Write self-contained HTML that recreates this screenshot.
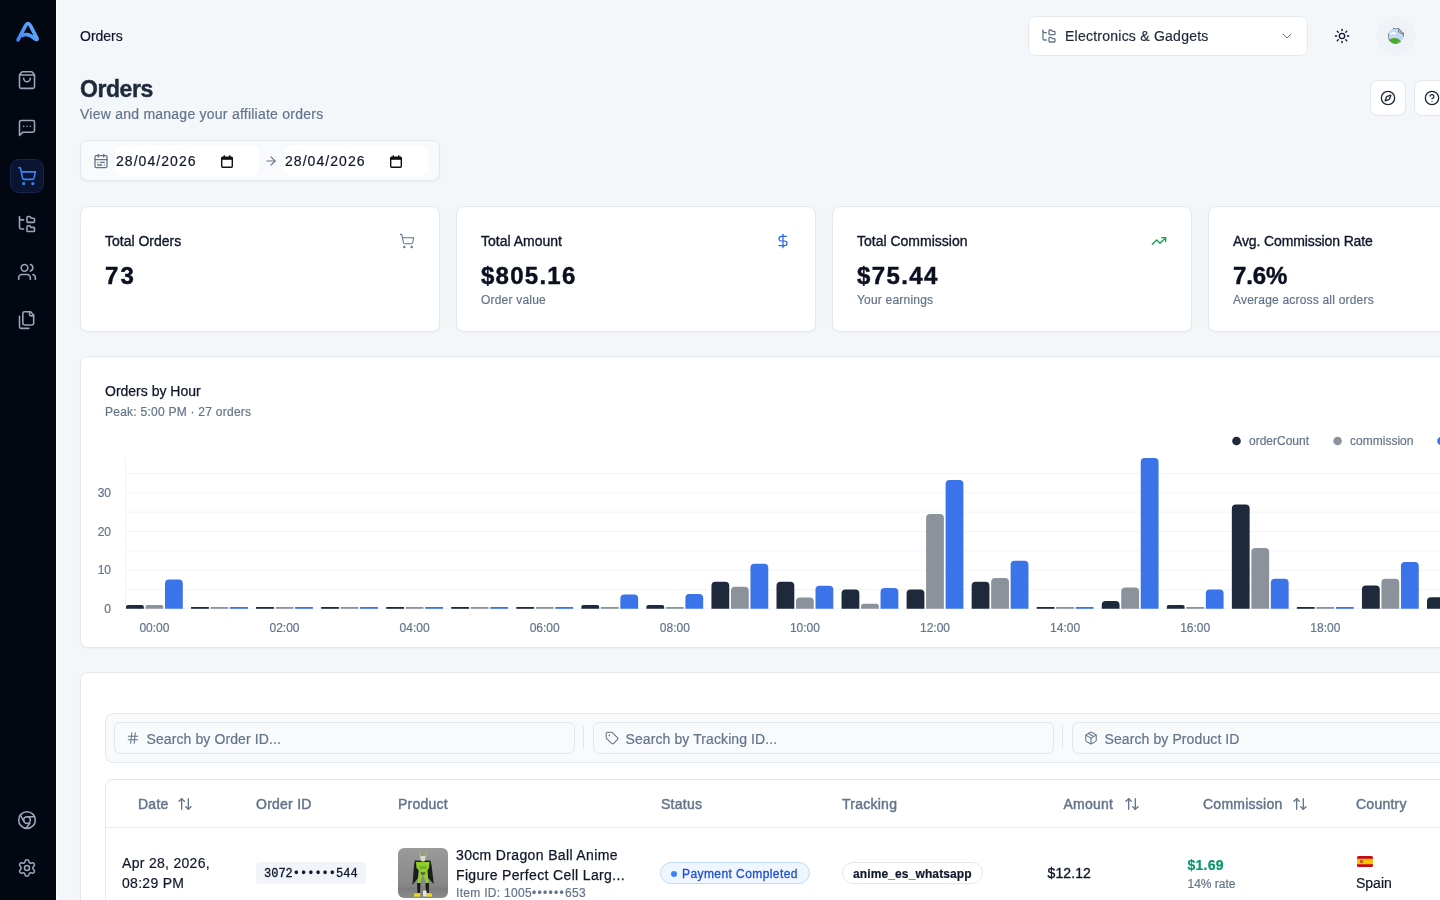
<!DOCTYPE html>
<html><head><meta charset="utf-8">
<style>
*{box-sizing:border-box;margin:0;padding:0}
html,body{width:1440px;height:900px;overflow:hidden}
body{background:#f4f7fa;font-family:"Liberation Sans",sans-serif;color:#0f172a;position:relative}
.abs{position:absolute}
svg.i{fill:none;stroke:currentColor;stroke-width:2;stroke-linecap:round;stroke-linejoin:round;display:block}
#side{position:absolute;left:0;top:0;width:56px;height:900px;background:#030712}
#sideline{position:absolute;left:56px;top:0;width:1px;height:900px;background:#fff}
.nav{position:absolute;left:17.4px;width:20px;height:20px;color:#9aa5b8}
.nav svg{width:20px;height:20px;stroke-width:1.9}
#active{position:absolute;left:10px;top:159px;width:34px;height:34px;border-radius:9px;background:#0b1531;border:1px solid #14264f}
.t{position:absolute;white-space:nowrap;line-height:1;-webkit-text-stroke:.2px currentColor}
.lbl{font-size:14px;color:#0f172a;-webkit-text-stroke:.35px #0f172a}
.med{-webkit-text-stroke:.3px currentColor}
.val{font-size:24px;font-weight:bold;color:#0b1020;-webkit-text-stroke:.45px #0b1020}
.sub{font-size:12px;color:#64748b;letter-spacing:.2px}
.sin{position:absolute;top:722px;width:461px;height:32px;background:#f8fafc;border:1px solid #e2e8f0;border-radius:6px}
.ph{left:31.5px;top:9px;font-size:14px;color:#64748b;letter-spacing:.1px}
.th{top:796.5px;font-size:14px;color:#64748b;-webkit-text-stroke:.45px #64748b;letter-spacing:.25px}
.sort{top:796px;width:16px;height:16px;color:#64748b;stroke-width:2}
.td{font-size:14px;color:#0f172a}
.pt{font-size:14px;color:#0f172a;-webkit-text-stroke:.25px #0f172a;letter-spacing:.35px}
.card{position:absolute;background:#fff;border:1px solid #e2e8f0;border-radius:8px;box-shadow:0 1px 2px rgba(15,23,42,.04)}
</style></head><body style="will-change:transform">
<div id="side">
  <svg class="abs" style="left:0;top:0" width="56" height="56" viewBox="0 0 56 56">
    <defs><linearGradient id="lg" gradientUnits="userSpaceOnUse" x1="17" y1="41" x2="38" y2="24"><stop offset="0" stop-color="#3b82f6"/><stop offset="1" stop-color="#67b2fb"/></linearGradient></defs>
    <path d="M18 39.8 L25.6 25.6 Q28 21.6 30.4 25.6 L37 38.4 Q37.6 40 35.8 39.4 Q31 35.2 27 34.6 Q24.6 34.3 22.6 35.4" fill="none" stroke="url(#lg)" stroke-width="3.6" stroke-linecap="round" stroke-linejoin="round"/>
  </svg>
  <div class="nav" style="top:70px"><svg class="i" viewBox="0 0 24 24"><path d="M16 10a4 4 0 0 1-8 0"/><path d="M3.103 6.034h17.794"/><path d="M3.4 5.467a2 2 0 0 0-.4 1.2V20a2 2 0 0 0 2 2h14a2 2 0 0 0 2-2V6.667a2 2 0 0 0-.4-1.2l-2-2.667A2 2 0 0 0 17 2H7a2 2 0 0 0-1.6.8z"/></svg></div>
  <div class="nav" style="top:118px"><svg class="i" viewBox="0 0 24 24"><path d="M21 15a2 2 0 0 1-2 2H7l-4 4V5a2 2 0 0 1 2-2h14a2 2 0 0 1 2 2z"/><path d="M8 10h.01"/><path d="M12 10h.01"/><path d="M16 10h.01"/></svg></div>
  <div id="active"></div>
  <div class="nav" style="top:166px;color:#3b82f6"><svg class="i" viewBox="0 0 24 24"><circle cx="8" cy="21" r="1"/><circle cx="19" cy="21" r="1"/><path d="M2.05 2.05h2l2.66 12.42a2 2 0 0 0 2 1.58h9.78a2 2 0 0 0 1.95-1.57l1.65-7.43H5.12"/></svg></div>
  <div class="nav" style="top:214px"><svg class="i" viewBox="0 0 24 24"><path d="M20 10a1 1 0 0 0 1-1V6a1 1 0 0 0-1-1h-2.5a1 1 0 0 1-.8-.4l-.9-1.2A1 1 0 0 0 15 3h-2a1 1 0 0 0-1 1v5a1 1 0 0 0 1 1Z"/><path d="M20 21a1 1 0 0 0 1-1v-3a1 1 0 0 0-1-1h-2.9a1 1 0 0 1-.88-.55l-.42-.85a1 1 0 0 0-.92-.6H13a1 1 0 0 0-1 1v5a1 1 0 0 0 1 1Z"/><path d="M3 5a2 2 0 0 0 2 2h3"/><path d="M3 3v13a2 2 0 0 0 2 2h3"/></svg></div>
  <div class="nav" style="top:262px"><svg class="i" viewBox="0 0 24 24"><path d="M16 21v-2a4 4 0 0 0-4-4H6a4 4 0 0 0-4 4v2"/><path d="M16 3.128a4 4 0 0 1 0 7.744"/><path d="M22 21v-2a4 4 0 0 0-3-3.87"/><circle cx="9" cy="7" r="4"/></svg></div>
  <div class="nav" style="top:310px"><svg class="i" viewBox="0 0 24 24"><path d="M20 7h-3a2 2 0 0 1-2-2V2"/><path d="M9 18a2 2 0 0 1-2-2V4a2 2 0 0 1 2-2h7l4 4v10a2 2 0 0 1-2 2Z"/><path d="M3 7.6v12.8A1.6 1.6 0 0 0 4.6 22h9.8"/></svg></div>
  <div class="nav" style="top:810px"><svg class="i" viewBox="0 0 24 24"><circle cx="12" cy="12" r="10"/><circle cx="12" cy="12" r="4"/><line x1="21.17" x2="12" y1="8" y2="8"/><line x1="3.95" x2="8.54" y1="6.06" y2="14"/><line x1="10.88" x2="15.46" y1="21.94" y2="15.94"/></svg></div>
  <div class="nav" style="top:858px"><svg class="i" viewBox="0 0 24 24"><path d="M9.671 4.136a2.34 2.34 0 0 1 4.659 0 2.34 2.34 0 0 0 3.319 1.915 2.34 2.34 0 0 1 2.33 4.033 2.34 2.34 0 0 0 0 3.831 2.34 2.34 0 0 1-2.33 4.033 2.34 2.34 0 0 0-3.319 1.915 2.34 2.34 0 0 1-4.659 0 2.34 2.34 0 0 0-3.32-1.915 2.34 2.34 0 0 1-2.33-4.033 2.34 2.34 0 0 0 0-3.831A2.34 2.34 0 0 1 6.35 6.051a2.34 2.34 0 0 0 3.319-1.915"/><circle cx="12" cy="12" r="3"/></svg></div>
</div>
<div id="sideline"></div>


<!-- HEADER -->
<div class="t" id="crumb" style="left:80px;top:28.8px;font-size:14px;color:#0f172a">Orders</div>

<div class="abs" id="sel" style="left:1028px;top:16px;width:280px;height:40px;background:#fff;border:1px solid #e2e8f0;border-radius:8px">
  <svg class="i abs" style="left:12px;top:11px;color:#64748b;stroke-width:1.9" width="16" height="16" viewBox="0 0 24 24"><path d="M20 10a1 1 0 0 0 1-1V6a1 1 0 0 0-1-1h-2.5a1 1 0 0 1-.8-.4l-.9-1.2A1 1 0 0 0 15 3h-2a1 1 0 0 0-1 1v5a1 1 0 0 0 1 1Z"/><path d="M20 21a1 1 0 0 0 1-1v-3a1 1 0 0 0-1-1h-2.9a1 1 0 0 1-.88-.55l-.42-.85a1 1 0 0 0-.92-.6H13a1 1 0 0 0-1 1v5a1 1 0 0 0 1 1Z"/><path d="M3 5a2 2 0 0 0 2 2h3"/><path d="M3 3v13a2 2 0 0 0 2 2h3"/></svg>
  <div class="t" style="left:36px;top:12px;font-size:14px;color:#1e293b;letter-spacing:.24px">Electronics &amp; Gadgets</div>
  <svg class="i abs" style="left:250px;top:11px;color:#64748b;stroke-width:1.5" width="16" height="16" viewBox="0 0 24 24"><path d="m6 9 6 6 6-6"/></svg>
</div>
<svg class="i abs" style="left:1334px;top:28px;color:#0f172a;stroke-width:2" width="16" height="16" viewBox="0 0 24 24"><circle cx="12" cy="12" r="4"/><path d="M12 2v2"/><path d="M12 20v2"/><path d="m4.93 4.93 1.41 1.41"/><path d="m17.66 17.66 1.41 1.41"/><path d="M2 12h2"/><path d="M20 12h2"/><path d="m6.34 17.66-1.41 1.41"/><path d="m19.07 4.93-1.41 1.41"/></svg>
<div class="abs" style="left:1376px;top:16px;width:40px;height:40px;border-radius:50%;background:#eff2f6">
  <svg class="abs" style="left:12px;top:12px" width="16" height="16" viewBox="0 0 16 16">
    <defs><clipPath id="cc"><circle cx="8" cy="8" r="8"/></clipPath></defs>
    <g clip-path="url(#cc)">
      <rect x="0" y="0" width="16" height="16" fill="#c7d8f3"/>
      <path d="M2 6.2 Q2.6 4.2 4.6 4.4 Q5.6 3 7 4.2 Q8.4 4.4 8.2 6.2 Z" fill="#fff"/>
      <ellipse cx="6.5" cy="15" rx="6.5" ry="5" fill="#4cab2e"/>
      <path d="M10.4 0 L16 0 L16 7.6 Z" fill="#eef1f5"/>
      <path d="M10.6 0.4 L15.8 6.6" stroke="#555" stroke-width=".9" fill="none"/>
      <path d="M10.4 1.5 L10.6 3.8 L14.8 6.2" stroke="#666" stroke-width=".8" fill="none"/>
      <path d="M16 10.6 L9.2 16 L16 16 Z" fill="#eef1f5"/>
      <path d="M15.5 11.4 L10.2 15.8" stroke="#fff" stroke-width="1.2"/>
      <path d="M13.3 12.8 L10.8 15" stroke="#4cab2e" stroke-width=".9"/>
    </g>
    <path d="M0.6 5.2 A7.6 7.6 0 0 0 2.2 13" stroke="#555" stroke-width=".7" fill="none"/>
    <path d="M5 0.6 A7.6 7.6 0 0 1 10.8 0.5" stroke="#555" stroke-width=".8" fill="none"/>
    <path d="M15.4 4.6 A7.6 7.6 0 0 1 15.6 8.4" stroke="#555" stroke-width=".8" fill="none"/>
  </svg>
</div>

<!-- PAGE HEADER -->
<div class="t" style="left:80px;top:78px;font-size:23px;font-weight:bold;color:#1e293b;letter-spacing:-0.45px;-webkit-text-stroke:.4px #1e293b">Orders</div>
<div class="t" style="left:80px;top:107px;font-size:14px;color:#64748b;letter-spacing:.24px">View and manage your affiliate orders</div>
<div class="abs" style="left:1370px;top:80px;width:36px;height:36px;background:#fff;border:1px solid #e2e8f0;border-radius:8px">
  <svg class="i abs" style="left:9px;top:9px;color:#1e293b" width="16" height="16" viewBox="0 0 24 24"><path d="m16.24 7.76-1.804 5.411a2 2 0 0 1-1.265 1.265L7.76 16.24l1.804-5.411a2 2 0 0 1 1.265-1.265z"/><circle cx="12" cy="12" r="10"/></svg>
</div>
<div class="abs" style="left:1414px;top:80px;width:36px;height:36px;background:#fff;border:1px solid #e2e8f0;border-radius:8px">
  <svg class="i abs" style="left:9px;top:9px;color:#1e293b" width="16" height="16" viewBox="0 0 24 24"><circle cx="12" cy="12" r="10"/><path d="M9.09 9a3 3 0 0 1 5.83 1c0 2-3 3-3 3"/><path d="M12 17h.01"/></svg>
</div>

<!-- DATE RANGE -->
<div class="abs" style="left:80px;top:140px;width:360px;height:41px;background:#f8fafc;border:1px solid #e2e8f0;border-radius:8px;box-shadow:0 1px 2px rgba(15,23,42,.05)">
  <svg class="i abs" style="left:12px;top:11.5px;color:#64748b;stroke-width:1.9" width="16" height="16" viewBox="0 0 24 24"><rect width="18" height="18" x="3" y="4" rx="2"/><path d="M16 2v4"/><path d="M3 10h18"/><path d="M8 2v4"/><path d="M17 14h-6"/><path d="M13 18H7"/><path d="M7 14h.01"/><path d="M17 18h.01"/></svg>
  <div class="abs" style="left:34px;top:4px;width:144px;height:31px;background:#fff;border-radius:8px">
    <div class="t" style="left:1px;top:9px;font-size:14px;color:#0f172a;letter-spacing:1.05px">28/04/2026</div>
    <svg class="abs" style="left:105.5px;top:9.5px" width="12" height="13" viewBox="0 0 12 13"><rect x="0.7" y="2.2" width="10.6" height="10" rx=".9" fill="none" stroke="#111" stroke-width="1.4"/><rect x="0.7" y="2.2" width="10.6" height="2.6" fill="#111"/><rect x="2.6" y="0.2" width="1.3" height="2.5" fill="#111"/><rect x="8.1" y="0.2" width="1.3" height="2.5" fill="#111"/></svg>
  </div>
  <svg class="i abs" style="left:183px;top:13px;color:#64748b;stroke-width:2" width="14" height="14" viewBox="0 0 24 24"><path d="M5 12h14"/><path d="m12 5 7 7-7 7"/></svg>
  <div class="abs" style="left:203px;top:4px;width:144px;height:31px;background:#fff;border-radius:8px">
    <div class="t" style="left:1px;top:9px;font-size:14px;color:#0f172a;letter-spacing:1.05px">28/04/2026</div>
    <svg class="abs" style="left:105.5px;top:9.5px" width="12" height="13" viewBox="0 0 12 13"><rect x="0.7" y="2.2" width="10.6" height="10" rx=".9" fill="none" stroke="#111" stroke-width="1.4"/><rect x="0.7" y="2.2" width="10.6" height="2.6" fill="#111"/><rect x="2.6" y="0.2" width="1.3" height="2.5" fill="#111"/><rect x="8.1" y="0.2" width="1.3" height="2.5" fill="#111"/></svg>
  </div>
</div>

<!-- STAT CARDS -->
<div class="card" style="left:80px;top:206px;width:360px;height:126px">
  <div class="t lbl" style="left:24px;top:27px">Total Orders</div>
  <svg class="i abs" style="left:318px;top:26px;color:#64748b;stroke-width:1.6" width="16" height="16" viewBox="0 0 24 24"><circle cx="8" cy="21" r="1"/><circle cx="19" cy="21" r="1"/><path d="M2.05 2.05h2l2.66 12.42a2 2 0 0 0 2 1.58h9.78a2 2 0 0 0 1.95-1.57l1.65-7.43H5.12"/></svg>
  <div class="t val" style="left:24px;top:57px;letter-spacing:2.2px">73</div>
</div>
<div class="card" style="left:456px;top:206px;width:360px;height:126px">
  <div class="t lbl" style="left:24px;top:27px">Total Amount</div>
  <svg class="i abs" style="left:318px;top:26px;color:#2563eb;stroke-width:1.8" width="16" height="16" viewBox="0 0 24 24"><line x1="12" x2="12" y1="2" y2="22"/><path d="M17 5H9.5a3.5 3.5 0 0 0 0 7h5a3.5 3.5 0 0 1 0 7H6"/></svg>
  <div class="t val" style="left:24px;top:57px;letter-spacing:1.25px">$805.16</div>
  <div class="t sub" style="left:24px;top:87px">Order value</div>
</div>
<div class="card" style="left:832px;top:206px;width:360px;height:126px">
  <div class="t lbl" style="left:24px;top:27px">Total Commission</div>
  <svg class="i abs" style="left:318px;top:26px;color:#16a34a;stroke-width:2" width="16" height="16" viewBox="0 0 24 24"><polyline points="22 7 13.5 15.5 8.5 10.5 2 17"/><polyline points="16 7 22 7 22 13"/></svg>
  <div class="t val" style="left:24px;top:57px;letter-spacing:1.4px">$75.44</div>
  <div class="t sub" style="left:24px;top:87px">Your earnings</div>
</div>
<div class="card" style="left:1208px;top:206px;width:360px;height:126px">
  <div class="t lbl" style="left:24px;top:27px;letter-spacing:-.12px">Avg. Commission Rate</div>
  <div class="t val" style="left:24px;top:57px;letter-spacing:-.1px">7.6%</div>
  <div class="t sub" style="left:24px;top:87px">Average across all orders</div>
</div>

<!-- CHART -->
<div class="card" id="chart" style="left:80px;top:356px;width:1488px;height:292px">
  <div class="t" style="left:24px;top:27px;font-size:14px;color:#0f172a;-webkit-text-stroke:.25px #0f172a">Orders by Hour</div>
  <div class="t" style="left:24px;top:49px;font-size:12px;color:#64748b;letter-spacing:.25px">Peak: 5:00 PM · 27 orders</div>
  <div id="legend"></div>
  <svg class="abs" id="plot" style="left:-1px;top:-1px" width="1488" height="292">
<line x1="45.5" x2="1488" y1="252.80" y2="252.80" stroke="#f1f4f8" stroke-width="1"/>
<line x1="45.5" x2="1488" y1="233.47" y2="233.47" stroke="#f1f4f8" stroke-width="1"/>
<line x1="45.5" x2="1488" y1="214.15" y2="214.15" stroke="#f1f4f8" stroke-width="1"/>
<line x1="45.5" x2="1488" y1="194.82" y2="194.82" stroke="#f1f4f8" stroke-width="1"/>
<line x1="45.5" x2="1488" y1="175.50" y2="175.50" stroke="#f1f4f8" stroke-width="1"/>
<line x1="45.5" x2="1488" y1="156.17" y2="156.17" stroke="#f1f4f8" stroke-width="1"/>
<line x1="45.5" x2="1488" y1="136.85" y2="136.85" stroke="#f1f4f8" stroke-width="1"/>
<line x1="45.5" x2="1488" y1="117.52" y2="117.52" stroke="#f1f4f8" stroke-width="1"/>
<line x1="45.5" x2="45.5" y1="102" y2="252.79999999999995" stroke="#f1f4f8" stroke-width="1"/>
<path d="M46.00,252.80 V250.87 Q46.00,248.93 47.93,248.93 H61.87 Q63.80,248.93 63.80,250.87 V252.80 Z" fill="#1e293b"/>
<path d="M65.50,252.80 V250.87 Q65.50,248.93 67.43,248.93 H81.37 Q83.30,248.93 83.30,250.87 V252.80 Z" fill="#8b929b"/>
<path d="M85.00,252.80 V227.43 Q85.00,223.43 89.00,223.43 H98.80 Q102.80,223.43 102.80,227.43 V252.80 Z" fill="#3b73e9"/>
<rect x="111.05" y="251.00" width="17.8" height="1.80" fill="#1e293b"/>
<rect x="130.55" y="251.00" width="17.8" height="1.80" fill="#8b929b"/>
<rect x="150.05" y="251.00" width="17.8" height="1.80" fill="#3b73e9"/>
<rect x="176.10" y="251.00" width="17.8" height="1.80" fill="#1e293b"/>
<rect x="195.60" y="251.00" width="17.8" height="1.80" fill="#8b929b"/>
<rect x="215.10" y="251.00" width="17.8" height="1.80" fill="#3b73e9"/>
<rect x="241.15" y="251.00" width="17.8" height="1.80" fill="#1e293b"/>
<rect x="260.65" y="251.00" width="17.8" height="1.80" fill="#8b929b"/>
<rect x="280.15" y="251.00" width="17.8" height="1.80" fill="#3b73e9"/>
<rect x="306.20" y="251.00" width="17.8" height="1.80" fill="#1e293b"/>
<rect x="325.70" y="251.00" width="17.8" height="1.80" fill="#8b929b"/>
<rect x="345.20" y="251.00" width="17.8" height="1.80" fill="#3b73e9"/>
<rect x="371.25" y="251.00" width="17.8" height="1.80" fill="#1e293b"/>
<rect x="390.75" y="251.00" width="17.8" height="1.80" fill="#8b929b"/>
<rect x="410.25" y="251.00" width="17.8" height="1.80" fill="#3b73e9"/>
<rect x="436.30" y="251.00" width="17.8" height="1.80" fill="#1e293b"/>
<rect x="455.80" y="251.00" width="17.8" height="1.80" fill="#8b929b"/>
<rect x="475.30" y="251.00" width="17.8" height="1.80" fill="#3b73e9"/>
<path d="M501.35,252.80 V250.87 Q501.35,248.93 503.28,248.93 H517.22 Q519.15,248.93 519.15,250.87 V252.80 Z" fill="#1e293b"/>
<rect x="520.85" y="251.00" width="17.8" height="1.80" fill="#8b929b"/>
<path d="M540.35,252.80 V242.38 Q540.35,238.38 544.35,238.38 H554.15 Q558.15,238.38 558.15,242.38 V252.80 Z" fill="#3b73e9"/>
<path d="M566.40,252.80 V250.87 Q566.40,248.93 568.33,248.93 H582.27 Q584.20,248.93 584.20,250.87 V252.80 Z" fill="#1e293b"/>
<rect x="585.90" y="251.00" width="17.8" height="1.80" fill="#8b929b"/>
<path d="M605.40,252.80 V241.88 Q605.40,237.88 609.40,237.88 H619.20 Q623.20,237.88 623.20,241.88 V252.80 Z" fill="#3b73e9"/>
<path d="M631.45,252.80 V229.75 Q631.45,225.75 635.45,225.75 H645.25 Q649.25,225.75 649.25,229.75 V252.80 Z" fill="#1e293b"/>
<path d="M650.95,252.80 V234.77 Q650.95,230.77 654.95,230.77 H664.75 Q668.75,230.77 668.75,234.77 V252.80 Z" fill="#8b929b"/>
<path d="M670.45,252.80 V211.73 Q670.45,207.73 674.45,207.73 H684.25 Q688.25,207.73 688.25,211.73 V252.80 Z" fill="#3b73e9"/>
<path d="M696.50,252.80 V229.75 Q696.50,225.75 700.50,225.75 H710.30 Q714.30,225.75 714.30,229.75 V252.80 Z" fill="#1e293b"/>
<path d="M716.00,252.80 V245.59 Q716.00,241.59 720.00,241.59 H729.80 Q733.80,241.59 733.80,245.59 V252.80 Z" fill="#8b929b"/>
<path d="M735.50,252.80 V233.80 Q735.50,229.80 739.50,229.80 H749.30 Q753.30,229.80 753.30,233.80 V252.80 Z" fill="#3b73e9"/>
<path d="M761.55,252.80 V237.47 Q761.55,233.47 765.55,233.47 H775.35 Q779.35,233.47 779.35,237.47 V252.80 Z" fill="#1e293b"/>
<path d="M781.05,252.80 V250.29 Q781.05,247.78 783.56,247.78 H796.34 Q798.85,247.78 798.85,250.29 V252.80 Z" fill="#8b929b"/>
<path d="M800.55,252.80 V236.12 Q800.55,232.12 804.55,232.12 H814.35 Q818.35,232.12 818.35,236.12 V252.80 Z" fill="#3b73e9"/>
<path d="M826.60,252.80 V237.47 Q826.60,233.47 830.60,233.47 H840.40 Q844.40,233.47 844.40,237.47 V252.80 Z" fill="#1e293b"/>
<path d="M846.10,252.80 V162.11 Q846.10,158.11 850.10,158.11 H859.90 Q863.90,158.11 863.90,162.11 V252.80 Z" fill="#8b929b"/>
<path d="M865.60,252.80 V128.10 Q865.60,124.10 869.60,124.10 H879.40 Q883.40,124.10 883.40,128.10 V252.80 Z" fill="#3b73e9"/>
<path d="M891.65,252.80 V229.75 Q891.65,225.75 895.65,225.75 H905.45 Q909.45,225.75 909.45,229.75 V252.80 Z" fill="#1e293b"/>
<path d="M911.15,252.80 V225.88 Q911.15,221.88 915.15,221.88 H924.95 Q928.95,221.88 928.95,225.88 V252.80 Z" fill="#8b929b"/>
<path d="M930.65,252.80 V208.87 Q930.65,204.87 934.65,204.87 H944.45 Q948.45,204.87 948.45,208.87 V252.80 Z" fill="#3b73e9"/>
<rect x="956.70" y="251.00" width="17.8" height="1.80" fill="#1e293b"/>
<rect x="976.20" y="251.00" width="17.8" height="1.80" fill="#8b929b"/>
<rect x="995.70" y="251.00" width="17.8" height="1.80" fill="#3b73e9"/>
<path d="M1021.75,252.80 V248.93 Q1021.75,245.07 1025.62,245.07 H1035.68 Q1039.55,245.07 1039.55,248.93 V252.80 Z" fill="#1e293b"/>
<path d="M1041.25,252.80 V235.54 Q1041.25,231.54 1045.25,231.54 H1055.05 Q1059.05,231.54 1059.05,235.54 V252.80 Z" fill="#8b929b"/>
<path d="M1060.75,252.80 V106.06 Q1060.75,102.06 1064.75,102.06 H1074.55 Q1078.55,102.06 1078.55,106.06 V252.80 Z" fill="#3b73e9"/>
<path d="M1086.80,252.80 V250.87 Q1086.80,248.93 1088.73,248.93 H1102.67 Q1104.60,248.93 1104.60,250.87 V252.80 Z" fill="#1e293b"/>
<rect x="1106.30" y="251.00" width="17.8" height="1.80" fill="#8b929b"/>
<path d="M1125.80,252.80 V237.47 Q1125.80,233.47 1129.80,233.47 H1139.60 Q1143.60,233.47 1143.60,237.47 V252.80 Z" fill="#3b73e9"/>
<path d="M1151.85,252.80 V152.44 Q1151.85,148.44 1155.85,148.44 H1165.65 Q1169.65,148.44 1169.65,152.44 V252.80 Z" fill="#1e293b"/>
<path d="M1171.35,252.80 V196.12 Q1171.35,192.12 1175.35,192.12 H1185.15 Q1189.15,192.12 1189.15,196.12 V252.80 Z" fill="#8b929b"/>
<path d="M1190.85,252.80 V226.85 Q1190.85,222.85 1194.85,222.85 H1204.65 Q1208.65,222.85 1208.65,226.85 V252.80 Z" fill="#3b73e9"/>
<rect x="1216.90" y="251.00" width="17.8" height="1.80" fill="#1e293b"/>
<rect x="1236.40" y="251.00" width="17.8" height="1.80" fill="#8b929b"/>
<rect x="1255.90" y="251.00" width="17.8" height="1.80" fill="#3b73e9"/>
<path d="M1281.95,252.80 V233.61 Q1281.95,229.61 1285.95,229.61 H1295.75 Q1299.75,229.61 1299.75,233.61 V252.80 Z" fill="#1e293b"/>
<path d="M1301.45,252.80 V226.85 Q1301.45,222.85 1305.45,222.85 H1315.25 Q1319.25,222.85 1319.25,226.85 V252.80 Z" fill="#8b929b"/>
<path d="M1320.95,252.80 V210.03 Q1320.95,206.03 1324.95,206.03 H1334.75 Q1338.75,206.03 1338.75,210.03 V252.80 Z" fill="#3b73e9"/>
<path d="M1347.00,252.80 V245.20 Q1347.00,241.20 1351.00,241.20 H1360.80 Q1364.80,241.20 1364.80,245.20 V252.80 Z" fill="#1e293b"/>
<path d="M1366.50,252.80 V241.34 Q1366.50,237.34 1370.50,237.34 H1380.30 Q1384.30,237.34 1384.30,241.34 V252.80 Z" fill="#8b929b"/>
<path d="M1386.00,252.80 V233.61 Q1386.00,229.61 1390.00,229.61 H1399.80 Q1403.80,229.61 1403.80,233.61 V252.80 Z" fill="#3b73e9"/>
<path d="M1412.05,252.80 V248.93 Q1412.05,245.07 1415.91,245.07 H1425.98 Q1429.85,245.07 1429.85,248.93 V252.80 Z" fill="#1e293b"/>
<path d="M1431.55,252.80 V245.20 Q1431.55,241.20 1435.55,241.20 H1445.35 Q1449.35,241.20 1449.35,245.20 V252.80 Z" fill="#8b929b"/>
<path d="M1451.05,252.80 V237.47 Q1451.05,233.47 1455.05,233.47 H1464.85 Q1468.85,233.47 1468.85,237.47 V252.80 Z" fill="#3b73e9"/>
<path d="M1477.10,252.80 V250.87 Q1477.10,248.93 1479.03,248.93 H1492.97 Q1494.90,248.93 1494.90,250.87 V252.80 Z" fill="#1e293b"/>
<path d="M1496.60,252.80 V250.87 Q1496.60,248.93 1498.53,248.93 H1512.47 Q1514.40,248.93 1514.40,250.87 V252.80 Z" fill="#8b929b"/>
<path d="M1516.10,252.80 V248.93 Q1516.10,245.07 1519.96,245.07 H1530.03 Q1533.90,245.07 1533.90,248.93 V252.80 Z" fill="#3b73e9"/>
<path d="M1542.15,252.80 V250.87 Q1542.15,248.93 1544.08,248.93 H1558.02 Q1559.95,248.93 1559.95,250.87 V252.80 Z" fill="#1e293b"/>
<path d="M1561.65,252.80 V250.87 Q1561.65,248.93 1563.58,248.93 H1577.52 Q1579.45,248.93 1579.45,250.87 V252.80 Z" fill="#8b929b"/>
<path d="M1581.15,252.80 V248.93 Q1581.15,245.07 1585.01,245.07 H1595.08 Q1598.95,245.07 1598.95,248.93 V252.80 Z" fill="#3b73e9"/>
<text x="31" y="257.00" text-anchor="end" font-size="12" fill="#64748b" stroke="#64748b" stroke-width=".2">0</text>
<text x="31" y="218.35" text-anchor="end" font-size="12" fill="#64748b" stroke="#64748b" stroke-width=".2">10</text>
<text x="31" y="179.70" text-anchor="end" font-size="12" fill="#64748b" stroke="#64748b" stroke-width=".2">20</text>
<text x="31" y="141.05" text-anchor="end" font-size="12" fill="#64748b" stroke="#64748b" stroke-width=".2">30</text>
<text x="74.40" y="275.80" text-anchor="middle" font-size="12" fill="#64748b" stroke="#64748b" stroke-width=".2">00:00</text>
<text x="204.50" y="275.80" text-anchor="middle" font-size="12" fill="#64748b" stroke="#64748b" stroke-width=".2">02:00</text>
<text x="334.60" y="275.80" text-anchor="middle" font-size="12" fill="#64748b" stroke="#64748b" stroke-width=".2">04:00</text>
<text x="464.70" y="275.80" text-anchor="middle" font-size="12" fill="#64748b" stroke="#64748b" stroke-width=".2">06:00</text>
<text x="594.80" y="275.80" text-anchor="middle" font-size="12" fill="#64748b" stroke="#64748b" stroke-width=".2">08:00</text>
<text x="724.90" y="275.80" text-anchor="middle" font-size="12" fill="#64748b" stroke="#64748b" stroke-width=".2">10:00</text>
<text x="855.00" y="275.80" text-anchor="middle" font-size="12" fill="#64748b" stroke="#64748b" stroke-width=".2">12:00</text>
<text x="985.10" y="275.80" text-anchor="middle" font-size="12" fill="#64748b" stroke="#64748b" stroke-width=".2">14:00</text>
<text x="1115.20" y="275.80" text-anchor="middle" font-size="12" fill="#64748b" stroke="#64748b" stroke-width=".2">16:00</text>
<text x="1245.30" y="275.80" text-anchor="middle" font-size="12" fill="#64748b" stroke="#64748b" stroke-width=".2">18:00</text>
<text x="1375.40" y="275.80" text-anchor="middle" font-size="12" fill="#64748b" stroke="#64748b" stroke-width=".2">20:00</text>
<text x="1505.50" y="275.80" text-anchor="middle" font-size="12" fill="#64748b" stroke="#64748b" stroke-width=".2">22:00</text>
<circle cx="1156.5" cy="85" r="4.3" fill="#1e293b"/>
<text x="1169.0" y="89.19999999999999" font-size="12" fill="#64748b" stroke="#64748b" stroke-width=".2">orderCount</text>
<circle cx="1257.6" cy="85" r="4.3" fill="#8b929b"/>
<text x="1270.1" y="89.19999999999999" font-size="12" fill="#64748b" stroke="#64748b" stroke-width=".2">commission</text>
<circle cx="1361.5" cy="85" r="4.3" fill="#3b73e9"/>
<text x="1374.0" y="89.19999999999999" font-size="12" fill="#64748b" stroke="#64748b" stroke-width=".2">amount</text>
</svg>
</div>

<!-- TABLE CARD -->
<div class="card" style="left:80px;top:672px;width:1488px;height:400px"></div>
<div class="abs" style="left:105px;top:713px;width:1438px;height:50px;background:#f8fafc;border:1px solid #e2e8f0;border-radius:8px"></div>
<div class="sin" style="left:114px"><svg class="i abs" style="left:11px;top:8px;color:#64748b;stroke-width:1.8" width="14" height="14" viewBox="0 0 24 24"><line x1="4" x2="20" y1="9" y2="9"/><line x1="4" x2="20" y1="15" y2="15"/><line x1="10" x2="8" y1="3" y2="21"/><line x1="16" x2="14" y1="3" y2="21"/></svg><div class="t ph">Search by Order ID...</div></div>
<div class="abs" style="left:583px;top:726px;width:1px;height:23px;background:#e2e8f0"></div>
<div class="sin" style="left:593px"><svg class="i abs" style="left:11px;top:8px;color:#64748b;stroke-width:1.8" width="14" height="14" viewBox="0 0 24 24"><path d="M12.586 2.586A2 2 0 0 0 11.172 2H4a2 2 0 0 0-2 2v7.172a2 2 0 0 0 .586 1.414l8.704 8.704a2.426 2.426 0 0 0 3.42 0l6.58-6.58a2.426 2.426 0 0 0 0-3.42z"/><circle cx="7.5" cy="7.5" r=".5" fill="currentColor"/></svg><div class="t ph">Search by Tracking ID...</div></div>
<div class="abs" style="left:1062px;top:726px;width:1px;height:23px;background:#e2e8f0"></div>
<div class="sin" style="left:1072px"><svg class="i abs" style="left:11px;top:8px;color:#64748b;stroke-width:1.8" width="14" height="14" viewBox="0 0 24 24"><path d="M11 21.73a2 2 0 0 0 2 0l7-4A2 2 0 0 0 21 16V8a2 2 0 0 0-1-1.73l-7-4a2 2 0 0 0-2 0l-7 4A2 2 0 0 0 3 8v8a2 2 0 0 0 1 1.73z"/><path d="M12 22V12"/><path d="m3.3 7 7.703 4.734a2 2 0 0 0 1.994 0L20.7 7"/><path d="m7.5 4.27 9 5.16"/></svg><div class="t ph">Search by Product ID</div></div>

<div class="abs" style="left:105px;top:779px;width:1438px;height:300px;background:#fff;border:1px solid #e2e8f0;border-radius:8px"></div>
<div class="abs" style="left:106px;top:827px;width:1436px;height:1px;background:#e8edf3"></div>
<div class="t th" style="left:138px">Date</div>
<svg class="i abs sort" style="left:176.7px" viewBox="0 0 24 24"><path d="m21 16-4 4-4-4"/><path d="M17 20V4"/><path d="m3 8 4-4 4 4"/><path d="M7 4v16"/></svg>
<div class="t th" style="left:256px">Order ID</div>
<div class="t th" style="left:398px">Product</div>
<div class="t th" style="left:661px">Status</div>
<div class="t th" style="left:842px">Tracking</div>
<div class="t th" style="left:1063.5px">Amount</div>
<svg class="i abs sort" style="left:1123.5px" viewBox="0 0 24 24"><path d="m21 16-4 4-4-4"/><path d="M17 20V4"/><path d="m3 8 4-4 4 4"/><path d="M7 4v16"/></svg>
<div class="t th" style="left:1203px">Commission</div>
<svg class="i abs sort" style="left:1291.5px" viewBox="0 0 24 24"><path d="m21 16-4 4-4-4"/><path d="M17 20V4"/><path d="m3 8 4-4 4 4"/><path d="M7 4v16"/></svg>
<div class="t th" style="left:1356px">Country</div>

<div class="t td" style="left:122px;top:853.7px;line-height:19.9px;letter-spacing:.3px">Apr 28, 2026,<br>08:29 PM</div>
<div class="abs" style="left:256px;top:862px;width:110px;height:22px;background:#f1f5f9;border-radius:4px"><div class="t" style="left:8px;top:6px;font-family:'Liberation Mono',monospace;font-size:12px;color:#0f172a;-webkit-text-stroke:.3px #0f172a">3072••••••544</div></div>
<div class="abs" style="left:398px;top:847.5px;width:50px;height:50px;border-radius:6px;overflow:hidden;background:linear-gradient(180deg,#9a9a9a 0%,#8c8c8c 55%,#858585 78%,#7c7c7c 80%,#8a8a8a 100%)">
  <svg class="abs" style="left:0;top:0" width="50" height="50" viewBox="0 0 50 50">
    <path d="M17 13 L16 17 L14.5 37 L20 30 L21 17 Z" fill="#1a1d18"/>
    <path d="M32.5 13 L33.5 17 L35.8 36 L30 30 L29 17 Z" fill="#1a1d18"/>
    <path d="M16.5 12.5 L32.5 12.5 L32 15 L17 15 Z" fill="#222"/>
    <path d="M18 14 L31.5 14 L31 20 L29.3 22.5 L29.5 26 L30.8 35 L28 35.5 L25.3 27 L24.5 27 L22 35.5 L19.3 35 L20.8 26 L21.2 22.5 L18.5 20 Z" fill="#8fcf2c"/>
    <path d="M21 18 L29 18 L28 21 L22 21 Z" fill="#6aa51e" opacity=".7"/>
    <path d="M22.5 24 L27.5 24 L26.5 27 L23.5 27 Z" fill="#3e4d2a" opacity=".7"/>
    <path d="M20.8 2 L23.5 8.5 L26.3 8.5 L28.8 2 L27.8 10 L22 10 Z" fill="#93d332"/>
    <path d="M22.2 8 L27.5 8 L27 12.8 L25 13.8 L22.8 12.8 Z" fill="#d6d8d2"/>
    <path d="M19 35 L22.5 35 L22 45 L19.5 45 Z" fill="#1b1b1b"/>
    <path d="M27.5 35 L31 35 L30.8 45 L28 45 Z" fill="#1b1b1b"/>
    <path d="M16 45.5 L22 45 L22.3 48.6 L16.3 48.8 Z" fill="#e8d81e"/>
    <path d="M28.2 45 L34 45.5 L34.2 48.8 L28.3 48.6 Z" fill="#e8d81e"/>
    <rect x="25" y="42.5" width="3.6" height="6" rx=".8" fill="#e4e4e6"/>
  </svg>
</div>
<div class="t pt" style="left:456px;top:845px;line-height:20px">30cm Dragon Ball Anime<br>Figure Perfect Cell Larg...</div>
<div class="t" style="left:456px;top:887px;font-size:12px;color:#64748b;letter-spacing:.3px">Item ID: 1005<span style="letter-spacing:1.3px">••••••</span>653</div>
<div class="abs" style="left:660px;top:862px;width:150px;height:22px;background:#eff6ff;border:1px solid #bfdbfe;border-radius:11px">
  <div class="abs" style="left:10px;top:7.5px;width:6px;height:6px;border-radius:50%;background:#3b82f6"></div>
  <div class="t" style="left:21px;top:5px;font-size:12px;color:#1f4fd5;-webkit-text-stroke:.3px #1f4fd5;letter-spacing:.42px">Payment Completed</div>
</div>
<div class="abs" style="left:842px;top:862px;width:141px;height:22px;background:#fff;border:1px solid #e2e8f0;border-radius:11px">
  <div class="t" style="left:10px;top:4.5px;font-size:12px;font-weight:bold;color:#0f172a;letter-spacing:.12px">anime_es_whatsapp</div>
</div>
<div class="t" style="left:1047.5px;top:866px;font-size:14px;color:#0f172a;-webkit-text-stroke:.35px #0f172a;letter-spacing:.1px">$12.12</div>
<div class="t" style="left:1187.5px;top:857.5px;font-size:14px;font-weight:bold;color:#059669;letter-spacing:.25px">$1.69</div>
<div class="t" style="left:1187.5px;top:878px;font-size:12px;color:#64748b">14% rate</div>
<svg class="abs" style="left:1357px;top:856px" width="16" height="11" viewBox="0 0 16 11"><rect width="16" height="11" rx="1.5" fill="#c60b1e"/><rect y="2.75" width="16" height="5.5" fill="#ffc400"/><rect x="3" y="4" width="3" height="3" fill="#ad1519" opacity=".6"/></svg>
<div class="t" style="left:1356px;top:876px;font-size:14px;color:#0f172a">Spain</div>
</body></html>
